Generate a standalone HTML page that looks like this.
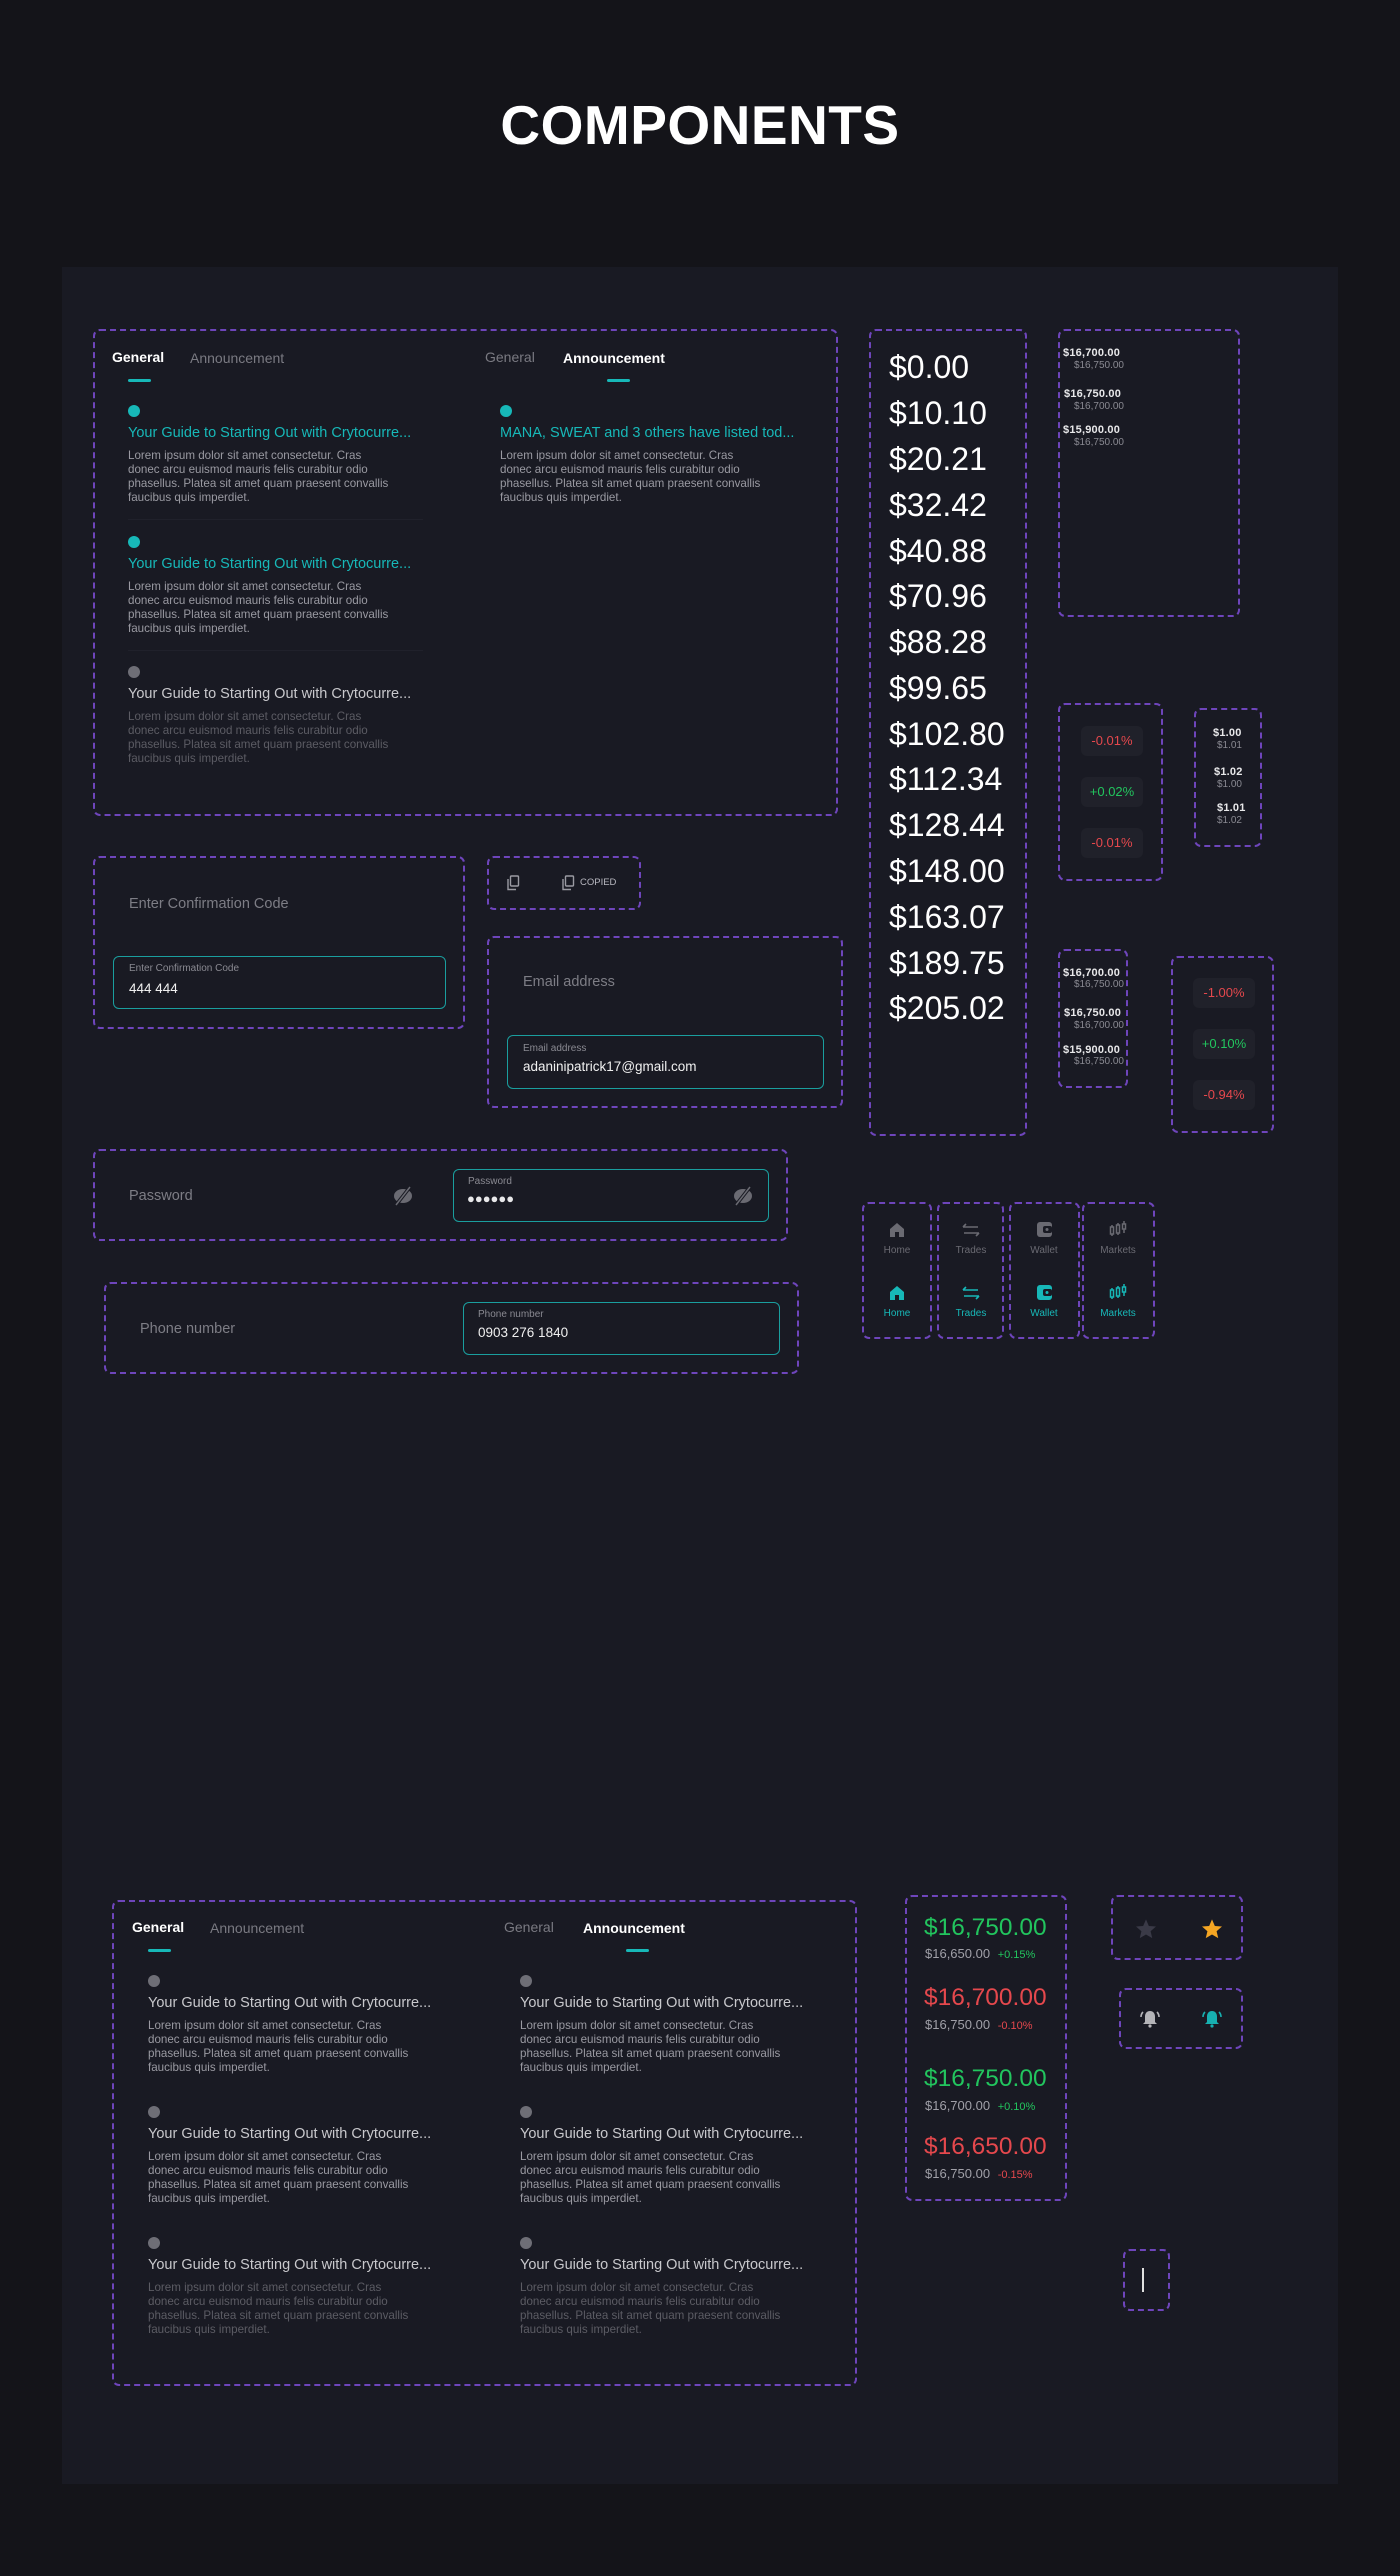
<!DOCTYPE html>
<html><head><meta charset="utf-8">
<style>
*{margin:0;padding:0;box-sizing:border-box}
body{width:1400px;height:2576px;background:#141419;position:relative;font-family:"Liberation Sans",sans-serif;color:#fff;overflow:hidden}
.a{position:absolute;white-space:nowrap}
.panel{position:absolute;left:62px;top:267px;width:1276px;height:2217px;background:#191a23}
.d{position:absolute;border:2px dashed #6e45bb;border-radius:7px}
.tab{font-size:14px;line-height:18px}
.ul{position:absolute;height:3px;width:23px;background:#17b8b8;border-radius:2px}
.dot{position:absolute;width:12px;height:12px;border-radius:50%}
.tt{font-size:14.5px;line-height:18px;color:#c8c8cc}
.bd{font-size:11.6px;line-height:14px;color:#9a9aa2}
.sep{position:absolute;height:1px;background:#20212b;width:295px}
.pr{font-size:32px;line-height:40px;color:#fff;left:889px}
.m{font-size:11px;line-height:12px;color:#e8e8ea;font-weight:bold;letter-spacing:0.2px}
.s{font-size:10px;line-height:12px;color:#8a8a92;text-align:right}
.pill{position:absolute;width:62px;height:30px;border-radius:6px;background:#20212a;font-size:13px;line-height:30px;text-align:center}
.red{color:#e5484d}.grn{color:#22c55e}
.inp{position:absolute;border:1.5px solid #1a9e9e;border-radius:6px}
.lab{font-size:10px;line-height:12px;color:#8a8a92}
.ph{font-size:14.5px;line-height:18px;color:#7d7d85}
.val{font-size:13.5px;line-height:16px;color:#f0f0f0}
.nl{font-size:10px;line-height:12px;text-align:center;width:60px}
</style></head><body>
<div class="a" style="left:0;width:1400px;top:92px;text-align:center;font-size:55px;line-height:66px;font-weight:bold;letter-spacing:0.5px">COMPONENTS</div>
<div class="panel"></div>

<!-- Tabs card top -->
<div class="d" style="left:93px;top:329px;width:745px;height:487px"></div>
<div class="a tab" style="left:112px;top:348px;color:#fff;font-weight:bold">General</div>
<div class="a tab" style="left:190px;top:349px;color:#7a7a82">Announcement</div>
<div class="ul" style="left:128px;top:379px"></div>
<div class="a tab" style="left:485px;top:348px;color:#7a7a82">General</div>
<div class="a tab" style="left:563px;top:349px;color:#fff;font-weight:bold">Announcement</div>
<div class="ul" style="left:607px;top:379px"></div>

<div class="dot" style="left:128px;top:405px;background:#17b8b8"></div>
<div class="a tt" style="left:128px;top:424px;color:#17b8b8">Your Guide to Starting Out with Crytocurre...</div>
<div class="a bd" style="left:128px;top:449px">Lorem ipsum dolor sit amet consectetur. Cras<br>donec arcu euismod mauris felis curabitur odio<br>phasellus. Platea sit amet quam praesent convallis<br>faucibus quis imperdiet.</div>
<div class="sep" style="left:128px;top:519px"></div>
<div class="dot" style="left:128px;top:536px;background:#17b8b8"></div>
<div class="a tt" style="left:128px;top:555px;color:#17b8b8">Your Guide to Starting Out with Crytocurre...</div>
<div class="a bd" style="left:128px;top:580px">Lorem ipsum dolor sit amet consectetur. Cras<br>donec arcu euismod mauris felis curabitur odio<br>phasellus. Platea sit amet quam praesent convallis<br>faucibus quis imperdiet.</div>
<div class="sep" style="left:128px;top:650px"></div>
<div class="dot" style="left:128px;top:666px;background:#6e6e76"></div>
<div class="a tt" style="left:128px;top:685px">Your Guide to Starting Out with Crytocurre...</div>
<div class="a bd" style="left:128px;top:710px;color:#5c5c64">Lorem ipsum dolor sit amet consectetur. Cras<br>donec arcu euismod mauris felis curabitur odio<br>phasellus. Platea sit amet quam praesent convallis<br>faucibus quis imperdiet.</div>

<div class="dot" style="left:500px;top:405px;background:#17b8b8"></div>
<div class="a tt" style="left:500px;top:424px;color:#17b8b8">MANA, SWEAT and 3 others have listed tod...</div>
<div class="a bd" style="left:500px;top:449px">Lorem ipsum dolor sit amet consectetur. Cras<br>donec arcu euismod mauris felis curabitur odio<br>phasellus. Platea sit amet quam praesent convallis<br>faucibus quis imperdiet.</div>

<!-- price column -->
<div class="d" style="left:869px;top:329px;width:158px;height:807px"></div>
<div class="a pr" style="top:347px">$0.00</div>
<div class="a pr" style="top:393px">$10.10</div>
<div class="a pr" style="top:439px">$20.21</div>
<div class="a pr" style="top:485px">$32.42</div>
<div class="a pr" style="top:531px">$40.88</div>
<div class="a pr" style="top:576px">$70.96</div>
<div class="a pr" style="top:622px">$88.28</div>
<div class="a pr" style="top:668px">$99.65</div>
<div class="a pr" style="top:714px">$102.80</div>
<div class="a pr" style="top:759px">$112.34</div>
<div class="a pr" style="top:805px">$128.44</div>
<div class="a pr" style="top:851px">$148.00</div>
<div class="a pr" style="top:897px">$163.07</div>
<div class="a pr" style="top:943px">$189.75</div>
<div class="a pr" style="top:988px">$205.02</div>

<!-- order list card -->
<div class="d" style="left:1058px;top:329px;width:182px;height:288px"></div>
<div class="a m" style="left:1063px;top:347px">$16,700.00</div><div class="a s" style="left:1063px;width:61px;top:360px">$16,750.00</div>
<div class="a m" style="left:1064px;top:388px">$16,750.00</div><div class="a s" style="left:1063px;width:61px;top:401px">$16,700.00</div>
<div class="a m" style="left:1063px;top:424px">$15,900.00</div><div class="a s" style="left:1063px;width:61px;top:437px">$16,750.00</div>

<div class="d" style="left:1058px;top:703px;width:105px;height:178px"></div>
<div class="pill red" style="left:1081px;top:726px">-0.01%</div>
<div class="pill grn" style="left:1081px;top:777px">+0.02%</div>
<div class="pill red" style="left:1081px;top:828px">-0.01%</div>

<div class="d" style="left:1194px;top:708px;width:68px;height:139px"></div>
<div class="a m" style="left:1213px;top:727px">$1.00</div><div class="a s" style="left:1200px;width:42px;top:740px">$1.01</div>
<div class="a m" style="left:1214px;top:766px">$1.02</div><div class="a s" style="left:1200px;width:42px;top:779px">$1.00</div>
<div class="a m" style="left:1217px;top:802px">$1.01</div><div class="a s" style="left:1200px;width:42px;top:815px">$1.02</div>

<div class="d" style="left:1058px;top:949px;width:70px;height:139px"></div>
<div class="a m" style="left:1063px;top:967px">$16,700.00</div><div class="a s" style="left:1063px;width:61px;top:979px">$16,750.00</div>
<div class="a m" style="left:1064px;top:1007px">$16,750.00</div><div class="a s" style="left:1063px;width:61px;top:1020px">$16,700.00</div>
<div class="a m" style="left:1063px;top:1044px">$15,900.00</div><div class="a s" style="left:1063px;width:61px;top:1056px">$16,750.00</div>

<div class="d" style="left:1171px;top:956px;width:103px;height:177px"></div>
<div class="pill red" style="left:1193px;top:978px">-1.00%</div>
<div class="pill grn" style="left:1193px;top:1029px">+0.10%</div>
<div class="pill red" style="left:1193px;top:1080px">-0.94%</div>

<!-- confirmation -->
<div class="d" style="left:93px;top:856px;width:372px;height:173px"></div>
<div class="a ph" style="left:129px;top:895px">Enter Confirmation Code</div>
<div class="inp" style="left:113px;top:956px;width:333px;height:53px"></div>
<div class="a lab" style="left:129px;top:963px">Enter Confirmation Code</div>
<div class="a val" style="left:129px;top:981px">444 444</div>

<!-- copy -->
<div class="d" style="left:487px;top:856px;width:154px;height:54px"></div>
<svg class="a" style="left:506px;top:875px" width="14" height="16" viewBox="0 0 14 16" fill="none" stroke="#9a9aa2" stroke-width="1.4"><rect x="4.5" y="1" width="8" height="10" rx="1"/><path d="M2 4v10.5h8"/></svg>
<svg class="a" style="left:561px;top:875px" width="14" height="16" viewBox="0 0 14 16" fill="none" stroke="#9a9aa2" stroke-width="1.4"><rect x="4.5" y="1" width="8" height="10" rx="1"/><path d="M2 4v10.5h8"/></svg>
<div class="a" style="left:580px;top:877px;font-size:9.5px;line-height:12px;color:#b8b8c0">COPIED</div>

<!-- email -->
<div class="d" style="left:487px;top:936px;width:356px;height:172px"></div>
<div class="a ph" style="left:523px;top:973px">Email address</div>
<div class="inp" style="left:507px;top:1035px;width:317px;height:54px"></div>
<div class="a lab" style="left:523px;top:1043px">Email address</div>
<div class="a val" style="left:523px;top:1059px">adaninipatrick17@gmail.com</div>

<!-- password -->
<div class="d" style="left:93px;top:1149px;width:695px;height:92px"></div>
<div class="a ph" style="left:129px;top:1187px">Password</div>
<svg class="a" style="left:392px;top:1186px" width="22" height="20" viewBox="0 0 22 20"><ellipse cx="11" cy="10" rx="9" ry="7" fill="#6a6a72"/><path d="M4 19L18 1" stroke="#191a23" stroke-width="3.5"/><path d="M4 19L18 1" stroke="#6a6a72" stroke-width="1.5"/></svg>
<div class="inp" style="left:453px;top:1169px;width:316px;height:53px"></div>
<div class="a lab" style="left:468px;top:1176px">Password</div>
<div class="a" style="left:467px;top:1192px;font-size:13px;line-height:14px;color:#e8e8ea">●●●●●●</div>
<svg class="a" style="left:732px;top:1186px" width="22" height="20" viewBox="0 0 22 20"><ellipse cx="11" cy="10" rx="9" ry="7" fill="#6a6a72"/><path d="M4 19L18 1" stroke="#191a23" stroke-width="3.5"/><path d="M4 19L18 1" stroke="#6a6a72" stroke-width="1.5"/></svg>

<!-- phone -->
<div class="d" style="left:104px;top:1282px;width:695px;height:92px"></div>
<div class="a ph" style="left:140px;top:1320px">Phone number</div>
<div class="inp" style="left:463px;top:1302px;width:317px;height:53px"></div>
<div class="a lab" style="left:478px;top:1309px">Phone number</div>
<div class="a val" style="left:478px;top:1325px">0903 276 1840</div>

<!-- nav -->
<div class="d" style="left:862px;top:1202px;width:70px;height:137px"></div>
<div class="d" style="left:937px;top:1202px;width:67px;height:137px"></div>
<div class="d" style="left:1009px;top:1202px;width:71px;height:137px"></div>
<div class="d" style="left:1082px;top:1202px;width:73px;height:137px"></div>
<svg class="a" style="left:889px;top:1222px" width="16" height="16" viewBox="0 0 16 16"><path d="M8 1L1 7v8h5v-5h4v5h5V7z" fill="#6a6a72"/></svg>
<svg class="a" style="left:889px;top:1285px" width="16" height="16" viewBox="0 0 16 16"><path d="M8 1L1 7v8h5v-5h4v5h5V7z" fill="#17b8b8"/></svg>
<svg class="a" style="left:962px;top:1223px" width="18" height="14" viewBox="0 0 18 14" fill="none" stroke="#6a6a72" stroke-width="1.6"><path d="M1 4h15M4 1L1 4"/><path d="M2 10h15M14 13l3-3"/></svg>
<svg class="a" style="left:962px;top:1286px" width="18" height="14" viewBox="0 0 18 14" fill="none" stroke="#17b8b8" stroke-width="1.6"><path d="M1 4h15M4 1L1 4"/><path d="M2 10h15M14 13l3-3"/></svg>
<svg class="a" style="left:1036px;top:1221px" width="17" height="17" viewBox="0 0 17 17"><rect x="1" y="1" width="15" height="15" rx="3" fill="#6a6a72"/><rect x="7" y="5" width="9" height="7" rx="2" fill="#191a23"/><circle cx="11" cy="8.5" r="1.5" fill="#6a6a72"/></svg>
<svg class="a" style="left:1036px;top:1284px" width="17" height="17" viewBox="0 0 17 17"><rect x="1" y="1" width="15" height="15" rx="3" fill="#17b8b8"/><rect x="7" y="5" width="9" height="7" rx="2" fill="#191a23"/><circle cx="11" cy="8.5" r="1.5" fill="#17b8b8"/></svg>
<svg class="a" style="left:1109px;top:1220px" width="18" height="18" viewBox="0 0 18 18" fill="none" stroke="#6a6a72" stroke-width="1.5"><rect x="1.5" y="7" width="3" height="7"/><path d="M3 5v2M3 14v2"/><rect x="7.5" y="5" width="3" height="8"/><path d="M9 3v2M9 13v2"/><rect x="13.5" y="4" width="3" height="5"/><path d="M15 1v3M15 9v4"/></svg>
<svg class="a" style="left:1109px;top:1283px" width="18" height="18" viewBox="0 0 18 18" fill="none" stroke="#17b8b8" stroke-width="1.5"><rect x="1.5" y="7" width="3" height="7"/><path d="M3 5v2M3 14v2"/><rect x="7.5" y="5" width="3" height="8"/><path d="M9 3v2M9 13v2"/><rect x="13.5" y="4" width="3" height="5"/><path d="M15 1v3M15 9v4"/></svg>
<div class="a nl" style="left:867px;top:1245px;color:#6a6a72">Home</div>
<div class="a nl" style="left:941px;top:1245px;color:#6a6a72">Trades</div>
<div class="a nl" style="left:1014px;top:1245px;color:#6a6a72">Wallet</div>
<div class="a nl" style="left:1088px;top:1245px;color:#6a6a72">Markets</div>
<div class="a nl" style="left:867px;top:1308px;color:#17b8b8">Home</div>
<div class="a nl" style="left:941px;top:1308px;color:#17b8b8">Trades</div>
<div class="a nl" style="left:1014px;top:1308px;color:#17b8b8">Wallet</div>
<div class="a nl" style="left:1088px;top:1308px;color:#17b8b8">Markets</div>

<!-- bottom tabs card -->
<div class="d" style="left:112px;top:1900px;width:745px;height:486px"></div>
<div class="a tab" style="left:132px;top:1918px;color:#fff;font-weight:bold">General</div>
<div class="a tab" style="left:210px;top:1919px;color:#7a7a82">Announcement</div>
<div class="ul" style="left:148px;top:1949px"></div>
<div class="a tab" style="left:504px;top:1918px;color:#7a7a82">General</div>
<div class="a tab" style="left:583px;top:1919px;color:#fff;font-weight:bold">Announcement</div>
<div class="ul" style="left:626px;top:1949px"></div>

<div class="dot" style="left:148px;top:1975px;background:#6e6e76"></div>
<div class="a tt" style="left:148px;top:1994px">Your Guide to Starting Out with Crytocurre...</div>
<div class="a bd" style="left:148px;top:2019px">Lorem ipsum dolor sit amet consectetur. Cras<br>donec arcu euismod mauris felis curabitur odio<br>phasellus. Platea sit amet quam praesent convallis<br>faucibus quis imperdiet.</div>
<div class="dot" style="left:148px;top:2106px;background:#6e6e76"></div>
<div class="a tt" style="left:148px;top:2125px">Your Guide to Starting Out with Crytocurre...</div>
<div class="a bd" style="left:148px;top:2150px">Lorem ipsum dolor sit amet consectetur. Cras<br>donec arcu euismod mauris felis curabitur odio<br>phasellus. Platea sit amet quam praesent convallis<br>faucibus quis imperdiet.</div>
<div class="dot" style="left:148px;top:2237px;background:#6e6e76"></div>
<div class="a tt" style="left:148px;top:2256px">Your Guide to Starting Out with Crytocurre...</div>
<div class="a bd" style="left:148px;top:2281px;color:#5c5c64">Lorem ipsum dolor sit amet consectetur. Cras<br>donec arcu euismod mauris felis curabitur odio<br>phasellus. Platea sit amet quam praesent convallis<br>faucibus quis imperdiet.</div>

<div class="dot" style="left:520px;top:1975px;background:#6e6e76"></div>
<div class="a tt" style="left:520px;top:1994px">Your Guide to Starting Out with Crytocurre...</div>
<div class="a bd" style="left:520px;top:2019px">Lorem ipsum dolor sit amet consectetur. Cras<br>donec arcu euismod mauris felis curabitur odio<br>phasellus. Platea sit amet quam praesent convallis<br>faucibus quis imperdiet.</div>
<div class="dot" style="left:520px;top:2106px;background:#6e6e76"></div>
<div class="a tt" style="left:520px;top:2125px">Your Guide to Starting Out with Crytocurre...</div>
<div class="a bd" style="left:520px;top:2150px">Lorem ipsum dolor sit amet consectetur. Cras<br>donec arcu euismod mauris felis curabitur odio<br>phasellus. Platea sit amet quam praesent convallis<br>faucibus quis imperdiet.</div>
<div class="dot" style="left:520px;top:2237px;background:#6e6e76"></div>
<div class="a tt" style="left:520px;top:2256px">Your Guide to Starting Out with Crytocurre...</div>
<div class="a bd" style="left:520px;top:2281px;color:#5c5c64">Lorem ipsum dolor sit amet consectetur. Cras<br>donec arcu euismod mauris felis curabitur odio<br>phasellus. Platea sit amet quam praesent convallis<br>faucibus quis imperdiet.</div>

<!-- big price card -->
<div class="d" style="left:905px;top:1895px;width:162px;height:306px"></div>
<div class="a grn" style="left:924px;top:1913px;font-size:24.5px;line-height:30px">$16,750.00</div>
<div class="a" style="left:925px;top:1946px;font-size:13px;line-height:16px;color:#a0a0a8">$16,650.00 <span class="grn" style="font-size:11px;margin-left:4px">+0.15%</span></div>
<div class="a red" style="left:924px;top:1983px;font-size:24.5px;line-height:30px">$16,700.00</div>
<div class="a" style="left:925px;top:2017px;font-size:13px;line-height:16px;color:#a0a0a8">$16,750.00 <span class="red" style="font-size:11px;margin-left:4px">-0.10%</span></div>
<div class="a grn" style="left:924px;top:2064px;font-size:24.5px;line-height:30px">$16,750.00</div>
<div class="a" style="left:925px;top:2098px;font-size:13px;line-height:16px;color:#a0a0a8">$16,700.00 <span class="grn" style="font-size:11px;margin-left:4px">+0.10%</span></div>
<div class="a red" style="left:924px;top:2132px;font-size:24.5px;line-height:30px">$16,650.00</div>
<div class="a" style="left:925px;top:2166px;font-size:13px;line-height:16px;color:#a0a0a8">$16,750.00 <span class="red" style="font-size:11px;margin-left:4px">-0.15%</span></div>

<!-- stars -->
<div class="d" style="left:1111px;top:1895px;width:132px;height:65px"></div>
<svg class="a" style="left:1135px;top:1918px" width="22" height="22" viewBox="0 0 24 24"><path d="M12 1.5l3.1 7.2 7.8.6-5.9 5.1 1.8 7.6L12 18l-6.8 4 1.8-7.6L1.1 9.3l7.8-.6z" fill="#3a3a47"/></svg>
<svg class="a" style="left:1201px;top:1918px" width="22" height="22" viewBox="0 0 24 24"><path d="M12 1.5l3.1 7.2 7.8.6-5.9 5.1 1.8 7.6L12 18l-6.8 4 1.8-7.6L1.1 9.3l7.8-.6z" fill="#f5a623"/></svg>

<!-- bells -->
<div class="d" style="left:1119px;top:1988px;width:124px;height:61px"></div>
<svg class="a" style="left:1139px;top:2008px" width="22" height="21" viewBox="0 0 22 21"><path d="M11 3c-3 0-5 2.3-5 5.5V14l-2 2h14l-2-2V8.5C16 5.3 14 3 11 3z" fill="#b4b4b8"/><circle cx="11" cy="18" r="1.6" fill="#b4b4b8"/><path d="M4 4C2.5 5.5 2 7 2 9M18 4c1.5 1.5 2 3 2 5" stroke="#b4b4b8" stroke-width="1.6" fill="none"/></svg>
<svg class="a" style="left:1201px;top:2008px" width="22" height="21" viewBox="0 0 22 21"><path d="M11 3c-3 0-5 2.3-5 5.5V14l-2 2h14l-2-2V8.5C16 5.3 14 3 11 3z" fill="#17b0b0"/><circle cx="11" cy="18" r="1.6" fill="#17b0b0"/><path d="M4 4C2.5 5.5 2 7 2 9M18 4c1.5 1.5 2 3 2 5" stroke="#17b0b0" stroke-width="1.6" fill="none"/></svg>

<!-- cursor -->
<div class="d" style="left:1123px;top:2249px;width:47px;height:62px"></div>
<div class="a" style="left:1142px;top:2268px;width:1.5px;height:24px;background:#e0e0e0"></div>
</body></html>
